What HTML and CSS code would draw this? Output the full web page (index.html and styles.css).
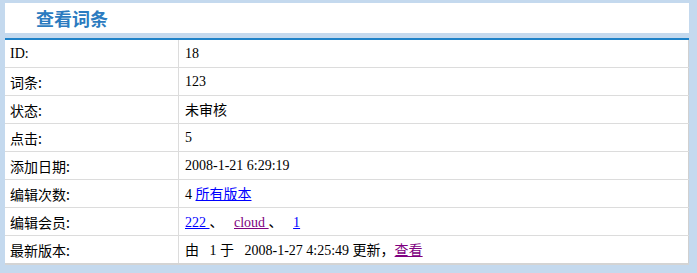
FILE: index.html
```html
<!DOCTYPE html>
<html>
<head>
<meta charset="utf-8">
<link rel="stylesheet" href="styles.css">
</head>
<body>
<div class="wrap">
  <div class="header"><h2 class="title">查看词条</h2></div>
  <table class="info">
    <tr><td class="label en">ID:</td><td class="val">18</td></tr>
    <tr><td class="label">词条:</td><td class="val">123</td></tr>
    <tr><td class="label">状态:</td><td class="val"><span class="cn">未审核</span></td></tr>
    <tr><td class="label">点击:</td><td class="val">5</td></tr>
    <tr><td class="label">添加日期:</td><td class="val">2008-1-21 6:29:19</td></tr>
    <tr><td class="label">编辑次数:</td><td class="val">4 <a href="#" class="link cn">所有版本</a></td></tr>
    <tr><td class="label">编辑会员:</td><td class="val"><a href="#" class="link">222 </a><span class="cn">、</span>&nbsp; &nbsp;<a href="#" class="link visited">cloud </a><span class="cn">、</span>&nbsp; &nbsp;<a href="#" class="link">1</a></td></tr>
    <tr><td class="label">最新版本:</td><td class="val"><span class="cn">由</span> &nbsp; 1 <span class="cn">于</span> &nbsp; 2008-1-27 4:25:49 <span class="cn">更新，</span><a href="#" class="link visited cn">查看</a></td></tr>
  </table>
</div>
</body>
</html>
```
FILE: styles.css
```css
html, body {
  margin: 0;
  padding: 0;
  background: #c4d9ee;
}
body {
  font-family: "Liberation Serif", "Noto Sans CJK SC", serif;
  font-size: 14px;
  color: #000;
}
.wrap {
  margin: 3px 8px 0 5px;
}
.header {
  background: #fff;
  height: 30px;
  border-bottom: 5px solid #c4d9ee;
}
.title {
  margin: 0;
  padding: 5px 0 0 31px;
  font-family: "Noto Sans CJK SC", sans-serif;
  font-size: 18px;
  font-weight: bold;
  line-height: 20px;
  color: #2b7bc0;
}
.info {
  width: 684px;
  border-collapse: collapse;
  background: #fff;
  border-top: 2px solid #1e82c8;
  border-right: 1px solid #d0d0d0;
  border-bottom: 2px solid #d4d4d4;
}
.info td {
  height: 27px;
  padding: 0 0 0 5px;
  border-bottom: 1px solid #dcdcdc;
  vertical-align: middle;
  line-height: 16px;
}
.info tr:last-child td {
  border-bottom: none;
}
.label {
  width: 168px;
  border-right: 1px solid #dcdcdc;
  font-family: "Noto Sans CJK SC", sans-serif;
  font-size: 14px;
}
.label.en {
  font-family: "Liberation Serif", serif;
  font-size: 14px;
}
.val {
  padding-left: 6px !important;
  font-size: 14px;
}
.cn {
  font-family: "Noto Sans CJK SC", sans-serif;
  font-size: 14px;
}
.link {
  color: #0000ff;
  text-decoration: underline;
}
.visited {
  color: #800080;
}
```
